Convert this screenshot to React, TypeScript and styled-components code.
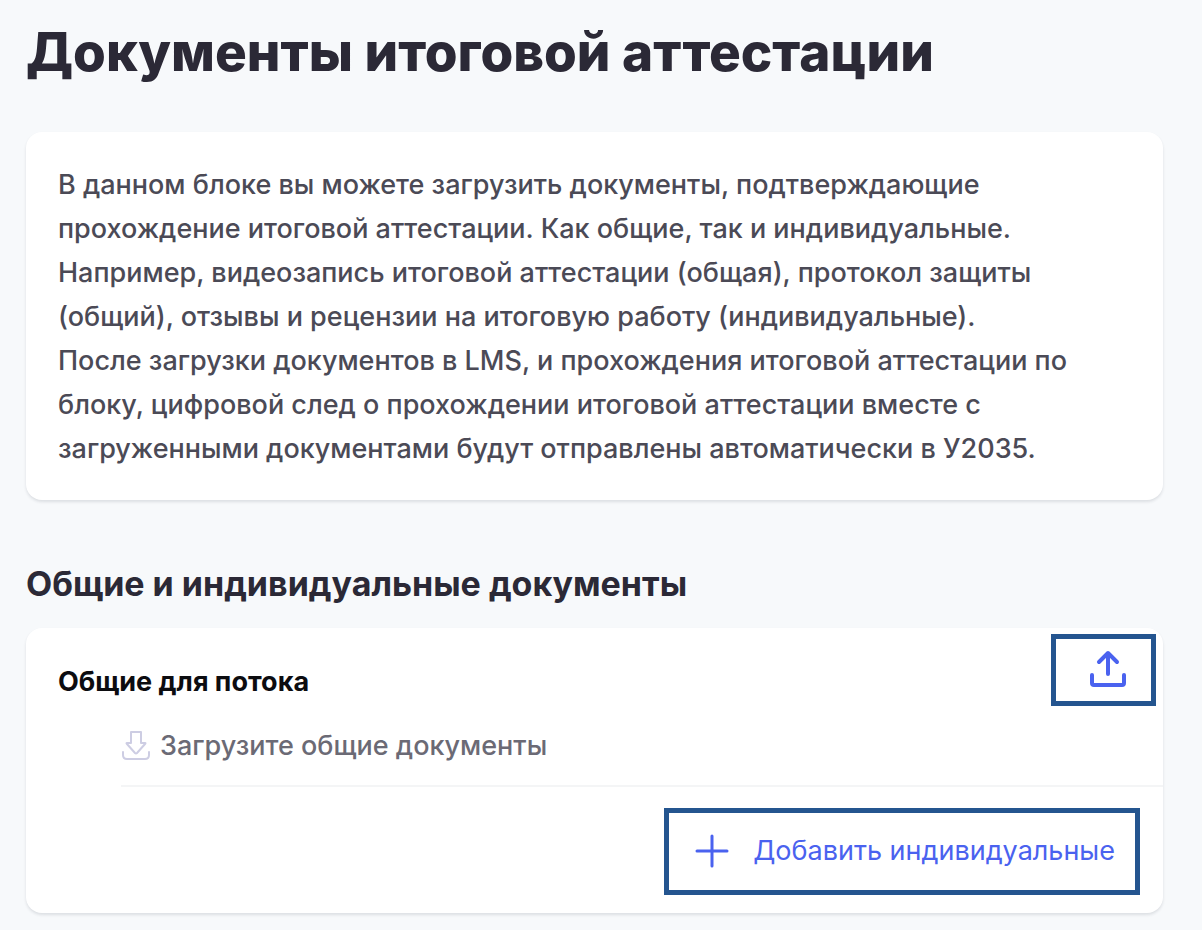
import React from "react";
import styled, { createGlobalStyle } from "styled-components";

const GlobalStyle = createGlobalStyle`
  * { box-sizing: border-box; }
  body { margin: 0; background: #f7f9fb; font-family: Inter, "Liberation Sans", sans-serif; color: #2b2936; }
`;

const Page = styled.main`
  padding: 20px 39px 17px 26px;
`;

const Title = styled.h1`
  margin: 0 0 48px;
  font-size: 53px;
  line-height: 64px;
  font-weight: 800;
  white-space: nowrap;
`;

const Card = styled.section`
  background: #fff;
  border-radius: 16px;
  box-shadow: 0 2px 3px rgba(30, 40, 60, 0.12);
`;

const InfoCard = styled(Card)`
  padding: 31px 32px 29px;
  margin-bottom: 64px;
`;

const InfoText = styled.p`
  margin: 0;
  font-size: 27px;
  line-height: 44px;
  font-weight: 500;
  color: #4b4a56;
  white-space: nowrap;
`;

const Subtitle = styled.h2`
  margin: 0 0 24px;
  font-size: 34px;
  line-height: 40px;
  font-weight: 700;
  white-space: nowrap;
`;

const CardHeader = styled.header`
  display: flex;
  justify-content: space-between;
  align-items: flex-start;
  padding: 6px 7px 0 32px;
`;

const GroupTitle = styled.h3`
  margin: 32px 0 0;
  font-size: 27px;
  line-height: 32px;
  font-weight: 700;
  color: #0c0c10;
`;

const OutlinedButton = styled.button`
  display: flex;
  align-items: center;
  padding: 0 20px 2px 26px;
  height: 87px;
  gap: 24px;
  border: 5px solid #24558f;
  background: #fff;
  color: #4a62ef;
  font: 400 27px/32px Inter, "Liberation Sans", sans-serif;
  white-space: nowrap;
  cursor: pointer;
`;

const UploadButton = styled(OutlinedButton)`
  height: 72px;
  padding: 0 24px 5px 33px;
`;

const EmptyRow = styled.div`
  display: flex;
  align-items: center;
  gap: 9px;
  height: 81px;
  margin-left: 95px;
  border-bottom: 2px solid #f4f5f6;
  font-size: 27px;
  line-height: 32px;
  font-weight: 500;
  color: #6b6a75;
`;

const CardFooter = styled.footer`
  display: flex;
  justify-content: flex-end;
  padding: 21px 23px 18px;
`;

const UploadIcon = () => (
  <svg width="38" height="38" viewBox="0 0 38 38" fill="none" stroke="currentColor" strokeWidth="4" strokeLinecap="round" strokeLinejoin="round" aria-hidden="true">
    <path d="M3 26v8q0 2 2 2h28q2 0 2-2v-8M19 25V4M10 13l9-9 9 9" />
  </svg>
);

const DownloadIcon = () => (
  <svg width="30" height="30" viewBox="0 0 30 30" fill="none" stroke="#cdcde3" strokeWidth="2" strokeLinecap="round" strokeLinejoin="round" aria-hidden="true">
    <path d="M10 1h10v11h4q1 0 0 1l-8 9q-1 1-2 0l-8-9q-1-1 0-1h4zM2 21v3q0 4 4 4h18q4 0 4-4v-3" />
  </svg>
);

const PlusIcon = () => (
  <svg width="34" height="34" viewBox="0 0 34 34" fill="none" stroke="currentColor" strokeWidth="3" strokeLinecap="round" aria-hidden="true">
    <path d="M17 2v30M2 17h30" />
  </svg>
);

export default function App() {
  return (
    <>
      <GlobalStyle />
      <Page>
        <Title>Документы итоговой аттестации</Title>
        <InfoCard>
          <InfoText>
            В данном блоке вы можете загрузить документы, подтверждающие<br />
            прохождение итоговой аттестации. Как общие, так и индивидуальные.<br />
            Например, видеозапись итоговой аттестации (общая), протокол защиты<br />
            (общий), отзывы и рецензии на итоговую работу (индивидуальные).<br />
            После загрузки документов в LMS, и прохождения итоговой аттестации по<br />
            блоку, цифровой след о прохождении итоговой аттестации вместе с<br />
            загруженными документами будут отправлены автоматически в У2035.
          </InfoText>
        </InfoCard>
        <Subtitle>Общие и индивидуальные документы</Subtitle>
        <Card>
          <CardHeader>
            <GroupTitle>Общие для потока</GroupTitle>
            <UploadButton type="button" aria-label="Загрузить">
              <UploadIcon />
            </UploadButton>
          </CardHeader>
          <EmptyRow>
            <DownloadIcon />
            Загрузите общие документы
          </EmptyRow>
          <CardFooter>
            <OutlinedButton type="button">
              <PlusIcon />
              Добавить индивидуальные
            </OutlinedButton>
          </CardFooter>
        </Card>
      </Page>
    </>
  );
}
